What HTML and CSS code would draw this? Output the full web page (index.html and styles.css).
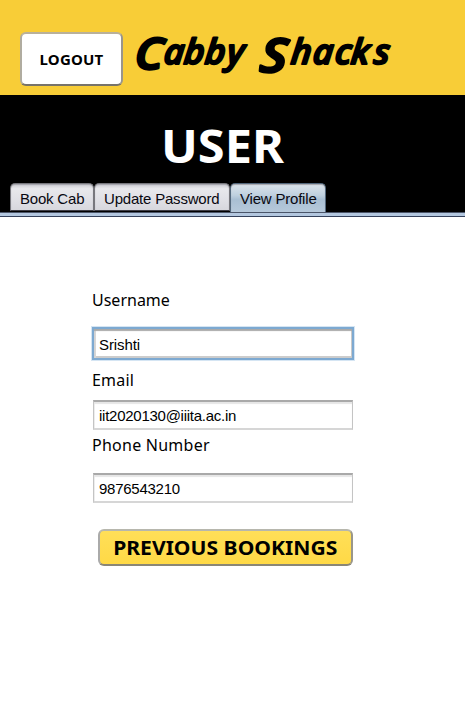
FILE: index.html
```
<!DOCTYPE html>
<html lang="en">
<head>
<meta charset="utf-8">
<title>Cabby Shacks</title>
<link rel="stylesheet" href="styles.css">
</head>
<body>
<header class="brand-bar">
  <button class="logout"><span>LOGOUT</span></button>
  <svg class="wordmark" width="266" height="60" viewBox="132 28 266 60" role="img" aria-label="Cabby Shacks">
    <text class="capital" transform="translate(134 69) skewX(-4) scale(1.1 1)">C</text>
    <text class="letters" transform="translate(0 64) skewX(-6)" x="163 183 204 226">abby</text>
    <text class="capital" transform="translate(259 72) skewX(-6) scale(1.2 1.08)">S</text>
    <text class="letters" transform="translate(0 64) skewX(-6)" x="290 312 334 350 373">hacks</text>
  </svg>
</header>
<section class="hero">
  <h1><span>USER</span></h1>
  <nav class="tabs">
    <a class="tab book"><span>Book Cab</span></a>
    <a class="tab update"><span>Update Password</span></a>
    <a class="tab active"><span>View Profile</span></a>
  </nav>
</section>
<div class="tab-rule"></div>
<main class="profile">
  <label class="label username" for="u"><span>Username</span></label>
  <input class="field focused" id="u" value="Srishti">
  <label class="label email" for="e"><span>Email</span></label>
  <input class="field mail" id="e" value="iit2020130@iiita.ac.in">
  <label class="label phone" for="p"><span>Phone Number</span></label>
  <input class="field number" id="p" value="9876543210">
  <button class="previous"><span>PREVIOUS BOOKINGS</span></button>
</main>
</body>
</html>
```
FILE: styles.css
```
* { box-sizing: border-box; }
body { margin: 0; background: #fff; color: #000; font-family: "Noto Sans", sans-serif; height: 715px; overflow: hidden; }
button { padding: 0; color: #000; font-family: inherit; font-weight: 700; white-space: nowrap; }
.brand-bar { height: 95px; background: #f8cd37; display: flex; align-items: flex-start; padding: 28px 0 0 20px; }
.logout { width: 103px; height: 54px; margin-top: 4px; background: #fff; border: 2px solid; border-color: #b9b09a #99958c #77736a #b0aca0; border-radius: 6px; font-size: 15px; letter-spacing: .2px; }
.wordmark { margin-left: 9px; overflow: visible; }
.wordmark text { font-family: "Open Sans", sans-serif; font-style: italic; font-weight: 600; stroke: #000; stroke-linejoin: round; stroke-linecap: round; }
.capital { font-size: 43px; stroke-width: 2.5px; }
.letters { font-size: 35px; stroke-width: 2px; }
.hero { height: 117px; background: #000; display: flex; flex-direction: column; justify-content: space-between; }
h1 { margin: 19px 0 0 161px; font-size: 46px; line-height: 63px; color: #fff; font-weight: 700; }
h1 span { display: inline-block; transform: scaleX(1.06); transform-origin: left; }
.tabs { display: flex; align-items: flex-end; padding-left: 10px; font: 15px/29px "Liberation Sans", sans-serif; letter-spacing: -.2px; white-space: nowrap; }
.tab { height: 28px; margin-bottom: 1px; border: 1px solid #77777d; border-bottom-color: #3c3c44; border-radius: 5px 5px 0 0; background: linear-gradient(#c8c8ce, #e8e8ec 18%, #dedee4 70%, #d7d7dd); color: #080810; padding-left: 9px; box-shadow: inset 0 1px 1px #a4a4aa; }
.book { width: 84px; }
.update { width: 136px; }
.active { width: 96px; height: 29px; margin-bottom: 0; background: linear-gradient(#dce5ec, #bfd0df 40%, #a9bfd3 55%, #b6c9db); border-color: #53687d; border-bottom: 0; }
.tab-rule { height: 5px; background: #b3c7df; border-top: 1px solid #4b5569; border-bottom: 1px solid #34415b; }
.profile { padding-left: 92px; display: flex; flex-direction: column; align-items: flex-start; }
.label { font-size: 16px; line-height: 22px; height: 22px; }
.username { margin-top: 72px; }
.field { font: 15px "Liberation Sans", sans-serif; letter-spacing: -.26px; color: #000; background: #fff; border: 1px solid #c4c4c4; border-top: 2px solid #a9a9a9; border-bottom: 2px solid #d6d6d6; border-radius: 0; padding: 0 5px; width: 260px; height: 30px; margin-left: 1px; outline: 0; box-shadow: inset 0 2px 1px #e6e6e6, inset 1px 0 #eee; }
.focused { width: 262px; height: 33px; margin: 16px 0 0; padding: 1px 5px 0; letter-spacing: -.1px; border: 2px solid #7da9d1; box-shadow: inset 0 2px 1px #aaa, inset 2px 0 #d7d7d7, inset -1px -2px #ccc, 0 0 0 1px #d5e5f3; }
.email { margin-top: 9px; letter-spacing: .2px; }
.mail { margin-top: 9px; }
.phone { margin-top: 4px; letter-spacing: .25px; }
.number { margin-top: 17px; }
.previous { width: 255px; height: 37px; margin: 26px 0 0 6px; background: linear-gradient(#ffdf58, #ffd946); border: 2px solid; border-color: #b7b7ad #99968a #8a8676 #aaa; border-radius: 6px; font-size: 20px; line-height: 32px; }
.previous span { display: inline-block; transform: scaleX(1.055); }
```
